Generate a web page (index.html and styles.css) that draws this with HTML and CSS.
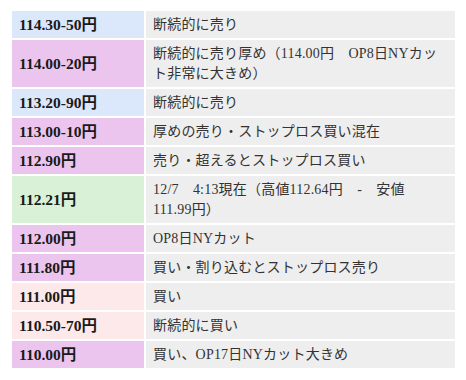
FILE: index.html
```html
<!DOCTYPE html>
<html lang="ja">
<head>
<meta charset="utf-8">
<link rel="stylesheet" href="styles.css">
</head>
<body>
<div class="wrap">
<table class="orders">
  <tbody>
    <tr><th class="lv blue">114.30-50円</th><td>断続的に売り</td></tr>
    <tr><th class="lv purple">114.00-20円</th><td>断続的に売り厚め（114.00円　OP8日NYカッ<br>ト非常に大きめ）</td></tr>
    <tr><th class="lv blue">113.20-90円</th><td>断続的に売り</td></tr>
    <tr><th class="lv purple">113.00-10円</th><td>厚めの売り・ストップロス買い混在</td></tr>
    <tr><th class="lv purple">112.90円</th><td>売り・超えるとストップロス買い</td></tr>
    <tr><th class="lv green">112.21円</th><td>12/7　4:13現在（高値112.64円　-　安値<br>111.99円）</td></tr>
    <tr><th class="lv purple">112.00円</th><td>OP8日NYカット</td></tr>
    <tr><th class="lv purple">111.80円</th><td>買い・割り込むとストップロス売り</td></tr>
    <tr><th class="lv pink">111.00円</th><td>買い</td></tr>
    <tr><th class="lv pink">110.50-70円</th><td>断続的に買い</td></tr>
    <tr><th class="lv purple">110.00円</th><td>買い、OP17日NYカット大きめ</td></tr>
  </tbody>
</table>
</div>
</body>
</html>
```

FILE: styles.css
```css
html, body {
  margin: 0;
  padding: 0;
  background: #ffffff;
}

.wrap {
  padding: 9px 10px;
}

.orders {
  border-collapse: separate;
  border-spacing: 2px;
  width: 447px;
  font-family: "Liberation Serif", "Noto Sans CJK JP", serif;
  font-size: 14px;
  line-height: 20px;
  color: #333333;
}

.orders th,
.orders td {
  padding: 4px 7px 3px;
  vertical-align: middle;
  text-align: left;
}

.orders th {
  width: 118px;
  font-size: 15.5px;
  font-weight: bold;
  color: #1a1a1a;
}

.orders td {
  background: #eeeeee;
  font-weight: normal;
  letter-spacing: 0.2px;
}

.blue { background: #dbe7fb; }
.purple { background: #ecc5ee; }
.green { background: #d9f1d6; }
.pink { background: #fde9ea; }
```
